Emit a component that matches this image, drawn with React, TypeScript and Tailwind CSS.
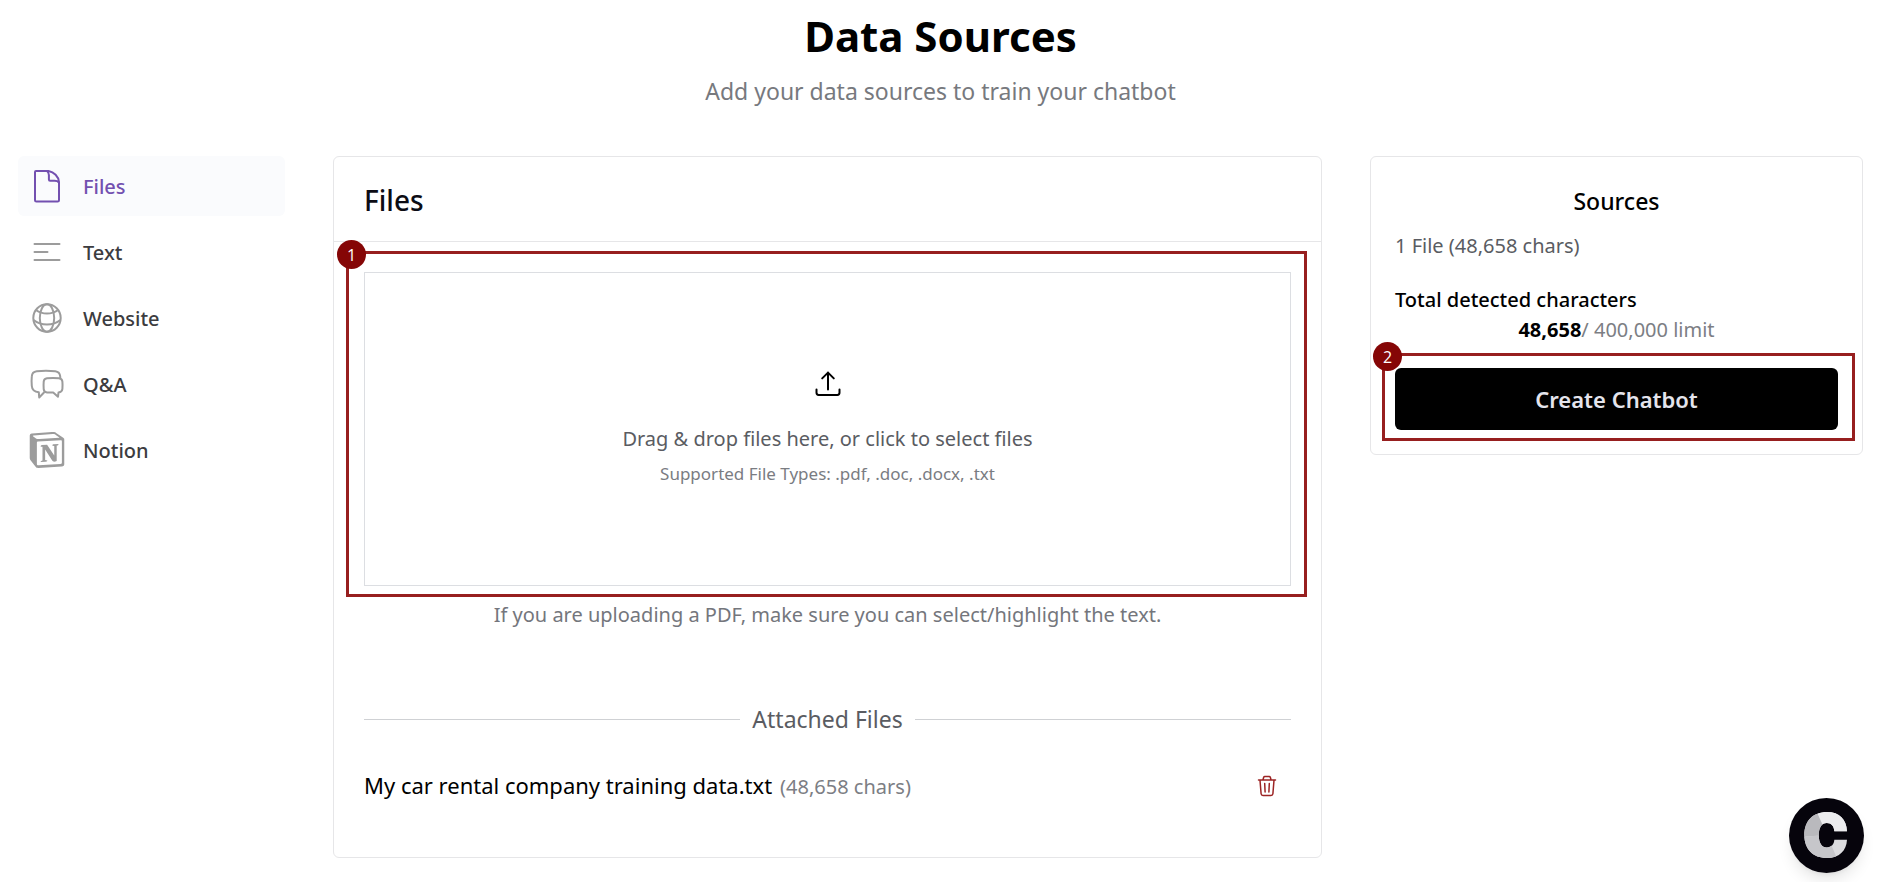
import React, { useState } from 'react';
import { SiNotion } from 'react-icons/si';

const FileIcon = () => (
  <svg viewBox="0 0 30 36" className="w-[30px] h-9" fill="none" stroke="currentColor" strokeWidth="2" strokeLinecap="round" strokeLinejoin="round">
    <path d="M4 3h12.500c5.500 1 10 5.400 10.500 11v18.200c0 .8-.6 1.400-1.400 1.400H4.400c-.8 0-1.400-.6-1.400-1.400V4c0-.6.4-1 1-1z" />
    <path d="M15 3c1.300 1 1.900 2.300 1.900 4v4.600c0 .7.400 1.200 1.200 1.200h4.400c2 0 3.500.5 4.500 1.800" />
  </svg>
);

const TextIcon = () => (
  <svg viewBox="0 0 30 30" className="w-[30px] h-[30px]" fill="none" stroke="currentColor" strokeWidth="2" strokeLinecap="round">
    <path d="M2.500 7h25M2.500 15h13M2.500 23h25" />
  </svg>
);

const GlobeIcon = () => (
  <svg viewBox="0 0 30 30" className="w-[30px] h-[30px]" fill="none" stroke="currentColor" strokeWidth="2">
    <circle cx="15" cy="15" r="13.700" />
    <ellipse cx="15" cy="15" rx="7.200" ry="13.700" />
    <path d="M4.200 7.200c3 2.200 6.700 3.300 10.800 3.300s7.800-1.100 10.800-3.300M1.500 17c3.800 3 8.500 4.500 13.500 4.500s9.700-1.500 13.500-4.500" />
  </svg>
);

const ChatIcon = () => (
  <svg viewBox="0 0 34 30" className="w-[34px] h-[30px]" fill="none" stroke="currentColor" strokeWidth="2" strokeLinecap="round" strokeLinejoin="round">
    <path d="M14 23.500l-4.800 5-.4-5.200c-4.300-.4-6.700-2.400-7-6.300-.3-3.400-.3-6.600 0-9.600.2-3 1.900-4.700 4.900-5.100 6.300-.8 12.300-.8 18.600 0 2.900.4 4.600 2.100 4.900 5.100l.1 1.600" />
    <path d="M17 9.300c3.900-.4 8.100-.4 11.900 0 2.100.2 3.300 1.400 3.500 3.400.2 2.400.2 4.900 0 7.300-.2 2-1.600 3.200-3.900 3.500l-.5 4.200-4.800-4.200H17c-2-.2-3.100-1.300-3.300-3.300-.2-2.500-.2-5 0-7.500.2-2 1.300-3.200 3.300-3.400z" />
  </svg>
);

const UploadIcon = () => (
  <svg viewBox="0 0 30 30" className="w-[30px] h-[30px]" fill="none" stroke="currentColor" strokeWidth="2" strokeLinecap="round" strokeLinejoin="round">
    <path d="M3.500 20.500v3.300c0 1.200.9 2.100 2.100 2.100h18.800c1.200 0 2.100-.9 2.100-2.100v-3.300M15 20.500V3.600M9.200 9.400L15 3.600l5.800 5.800" />
  </svg>
);

const TrashIcon = () => (
  <svg viewBox="0 0 24 24" className="w-6 h-6" fill="none" stroke="currentColor" strokeWidth="1.500" strokeLinecap="round" strokeLinejoin="round">
    <path d="M3.500 6h17M8 5.800l.6-2.300c.2-.6.600-.9 1.200-.9h4.400c.6 0 1 .3 1.200.9l.6 2.300M5 6.200l1.100 13.600c.1 1.100.8 1.700 1.900 1.700h8c1.100 0 1.800-.6 1.900-1.700L19 6.200M9.700 9.500l.4 8.500M14.300 9.500l-.4 8.500" />
  </svg>
);

// Faceted ring logo of the chat bubble
const BubbleLogo = () => (
  <svg viewBox="0 0 75 75" className="w-full h-full">
    <defs>
      <clipPath id="ring">
        <path d="M58 33.200C57.500 21.500 50.500 14 38 14 24 14 15.300 23 15.300 37S24 60 38 60c12 0 19.500-7 20-18.200H45.300C45.200 46 42.500 49.500 37.800 49.500c-5 0-8-4.500-8-12.300s3-12.200 8-12.200c4.500 0 7.200 3 7.500 8.200z" />
      </clipPath>
    </defs>
    <circle cx="37.500" cy="37.500" r="37.500" fill="#06040c" />
    <g clipPath="url(#ring)">
      <path d="M10 10h55v55H10z" fill="#dcdcdf" />
      <path d="M26 10l12 27 27-4V10z" fill="#ececee" />
      <path d="M26 10l12 27-28 2V10z" fill="#b9b9bd" />
      <path d="M10 39l28-2 12 28H10z" fill="#c6c6ca" />
    </g>
  </svg>
);

const tabs = [
  { name: 'Files', icon: <FileIcon /> },
  { name: 'Text', icon: <TextIcon /> },
  { name: 'Website', icon: <GlobeIcon /> },
  { name: 'Q&A', icon: <ChatIcon /> },
  { name: 'Notion', icon: <SiNotion className="w-9 h-9" /> },
];

const files = [{ name: 'My car rental company training data.txt', chars: 48658 }];

// Numbered outline drawn over the step it points at
function Step({ number, className }: { number: number; className: string }) {
  return (
    <div className={`absolute border-3 border-[#971f1f] pointer-events-none ${className}`}>
      <span className="absolute -top-3.5 -left-3 flex items-center justify-center w-[29px] h-[29px] rounded-full bg-[#850606] text-white text-base font-['Open_Sans',sans-serif]">
        {number}
      </span>
    </div>
  );
}

export default function App() {
  const [active, setActive] = useState('Files');

  return (
    <div className="min-h-screen bg-white text-black font-['Noto_Sans',sans-serif] pl-[18px] pr-4 pb-6 text-[20px] leading-7">
      <header className="text-center pt-2.5">
        <h1 className="text-[42px] leading-[52px] font-bold">Data Sources</h1>
        <p className="mt-[15px] text-[23px] leading-7 text-[#77797e]">Add your data sources to train your chatbot</p>
      </header>

      <div className="mt-[51px] grid grid-cols-[267fr_989fr_493fr] gap-12 items-start">
        <nav className="flex flex-col gap-1.5">
          {tabs.map((tab) => (
            <button
              key={tab.name}
              onClick={() => setActive(tab.name)}
              className={`flex items-center gap-[18px] h-[60px] pl-[11px] rounded-md font-medium text-left ${
                active === tab.name ? 'bg-[#fafbfd] text-[#7350b0]' : 'text-[#3c3c40]'
              }`}
            >
              <span className={`flex justify-center w-9 ${active === tab.name ? '' : 'text-[#9c9c9c]'}`}>{tab.icon}</span>
              <span className="pt-0.5">{tab.name}</span>
            </button>
          ))}
        </nav>

        <main className="border border-[#e6e6e8] rounded-md">
          <div className="h-[85px] px-[30px] pt-0.5 flex items-center border-b border-[#e6e6e8]">
            <h2 className="text-[28px] leading-9 font-medium text-[#0c0c14]">Files</h2>
          </div>

          <div className="px-[30px] pt-[30px] pb-14">
            <div className="relative">
              <label className="flex flex-col items-center h-[314px] border border-[#dcdee2] pt-24 cursor-pointer">
                <input type="file" multiple accept=".pdf,.doc,.docx,.txt" className="sr-only" />
                <UploadIcon />
                <span className="mt-[26px] text-[#5a5c62]">Drag &amp; drop files here, or click to select files</span>
                <span className="mt-[7px] text-[17px] text-[#7a7c82]">Supported File Types: .pdf, .doc, .docx, .txt</span>
              </label>
              <Step number={1} className="-top-[21px] -bottom-[11px] -left-[18px] -right-4" />
            </div>
            <p className="mt-[15px] text-center text-[#74767c]">If you are uploading a PDF, make sure you can select/highlight the text.</p>

            <div className="mt-[76px] flex items-center gap-3">
              <hr className="flex-1 border-[#cfd1d4]" />
              <h3 className="text-[23px] leading-7 text-[#5a5c62]">Attached Files</h3>
              <hr className="flex-1 border-[#cfd1d4]" />
            </div>

            <ul className="mt-[38px]">
              {files.map((file) => (
                <li key={file.name} className="flex items-center justify-between pr-3">
                  <div className="flex items-baseline gap-2">
                    <span className="text-[22px]">{file.name}</span>
                    <span className="text-[#7c7e84]">({file.chars.toLocaleString('en-US')} chars)</span>
                  </div>
                  <button aria-label="Delete file" className="text-[#9c2424]">
                    <TrashIcon />
                  </button>
                </li>
              ))}
            </ul>
          </div>
        </main>

        <aside className="border border-[#e6e6e8] rounded-md px-6 pt-[30px] pb-6">
          <h2 className="text-center text-[23px] leading-7 font-medium">Sources</h2>
          <p className="mt-[17px] text-[#5a5c62]">1 File (48,658 chars)</p>
          <h3 className="mt-[26px] font-medium">Total detected characters</h3>
          <p className="mt-[2px] text-center text-[#7c7e84]">
            <b className="text-black">48,658</b>/ 400,000 limit
          </p>
          <div className="relative mt-6">
            <button className="w-full h-[62px] rounded-md bg-black text-[#e4e4ec] text-[22px] font-semibold">Create Chatbot</button>
            <Step number={2} className="-top-[15px] -bottom-[11px] -left-[13px] -right-[17px]" />
          </div>
        </aside>
      </div>

      <button aria-label="Open chat" className="fixed right-[15px] bottom-[9px] w-[75px] h-[75px] rounded-full shadow-lg">
        <BubbleLogo />
      </button>
    </div>
  );
}
